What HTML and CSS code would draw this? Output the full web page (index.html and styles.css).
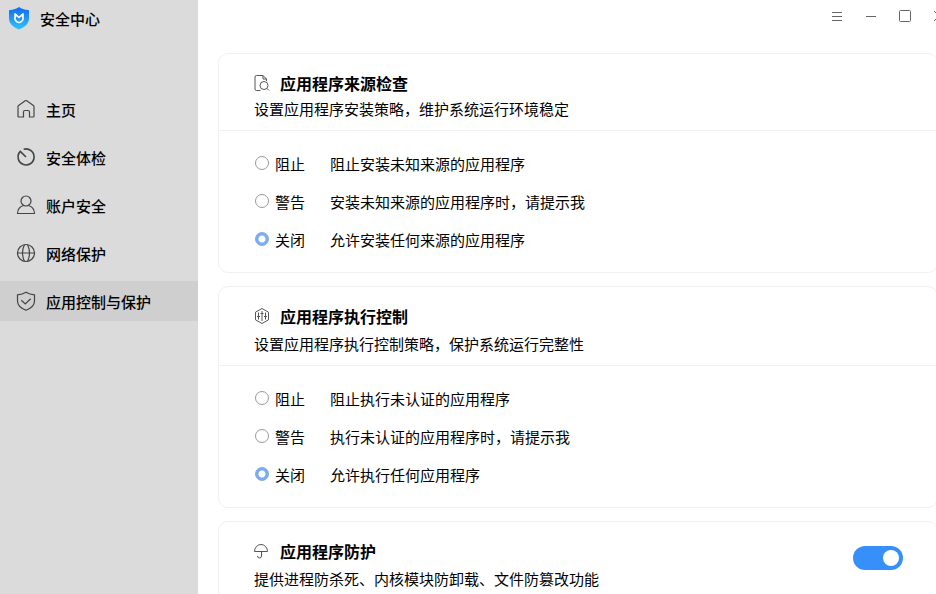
FILE: index.html
```
<!DOCTYPE html>
<html lang="zh-CN">
<head>
    <meta charset="UTF-8">
    <meta name="viewport" content="width=device-width, initial-scale=1.0">
    <title>安全中心</title>
    <link rel="stylesheet" href="styles.css">
</head>
<body>
    <div class="window">
        <aside class="sidebar">
            <div class="brand">
                <svg class="logo" viewBox="0 0 22 24">
                    <defs>
                        <linearGradient id="shield" x1="0" y1="0" x2="0" y2="1">
                            <stop offset="0" stop-color="#1268f5"/>
                            <stop offset="1" stop-color="#2ec4fb"/>
                        </linearGradient>
                    </defs>
                    <path fill="url(#shield)" d="M11 1c2.500 1.800 5.500 2.800 9.200 2.900.6 0 .8.400.8 1V12c0 5.500-4 9.300-10 11.400C5 21.300 1 17.500 1 12V4.900c0-.6.200-1 .8-1C5.500 3.800 8.500 2.800 11 1z"/>
                    <path fill="none" stroke="#fff" stroke-width="1.600" stroke-linejoin="round" stroke-linecap="round" d="M7.600 10.200a4 4 0 1 0 6.800 0M7 10.500V7.800l4 3.700 4-3.700v2.700"/>
                </svg>
                <span>安全中心</span>
            </div>
            <nav class="menu">
                <a href="#">
                    <svg class="icon" viewBox="0 0 20 20"><path d="M2 7.500q0-.7.600-1.100L9.200 1.800q.8-.5 1.600 0l6.600 4.600q.6.400.6 1.100V17q0 1-1 1h-3.500V13q0-1.500-1.500-1.500H9Q7.500 11.500 7.500 13v5H3q-1 0-1-1z"/></svg>
                    <span>主页</span>
                </a>
                <a href="#">
                    <svg class="icon bold" viewBox="0 0 20 20"><path d="M7.700 2.300A8 8 0 1 1 4.300 4.400L10 10"/></svg>
                    <span>安全体检</span>
                </a>
                <a href="#">
                    <svg class="icon" viewBox="0 0 20 20"><circle cx="10" cy="6" r="5"/><path d="M7.500 10.500C4 11.500 1.600 14.500 1.500 18.500h17c-.1-4-2.500-7-6-8"/></svg>
                    <span>账户安全</span>
                </a>
                <a href="#">
                    <svg class="icon" viewBox="0 0 20 20"><circle cx="10" cy="10" r="8.500"/><path d="M1.500 10h17M8.500 1.500q-4 8.500 0 17M11.500 1.500q4 8.500 0 17"/></svg>
                    <span>网络保护</span>
                </a>
                <a href="#" class="active">
                    <svg class="icon" viewBox="0 0 20 20"><path d="M10 1.200c2.500 1.600 5.300 2.400 8.500 2.700V10c0 4.300-3.500 7.300-8.500 9.200C5 17.300 1.500 14.300 1.500 10V3.900C4.700 3.600 7.500 2.800 10 1.200zM5.300 9.300l4 3.700 5.400-5.200"/></svg>
                    <span>应用控制与保护</span>
                </a>
            </nav>
        </aside>

        <main class="main">
            <div class="titlebar">
                <button type="button" aria-label="菜单"><svg viewBox="0 0 14 14"><path d="M2 3.500h10M2 7.500h10M2 11.500h10"/></svg></button>
                <button type="button" aria-label="最小化"><svg viewBox="0 0 14 14"><path d="M2 7.500h10"/></svg></button>
                <button type="button" aria-label="最大化"><svg viewBox="0 0 14 14"><rect x="1.500" y="1.500" width="11" height="11" rx="1"/></svg></button>
                <button type="button" aria-label="关闭"><svg viewBox="0 0 14 14"><path d="M2 2l10 10M12 2L2 12"/></svg></button>
            </div>

            <section class="card compact">
                <header class="card-head">
                    <div>
                        <h2>
                            <svg viewBox="0 0 16 16"><path d="M6.500 15.500h-4q-1.500 0-1.500-1.500V2Q1 .5 2.500 .5h6.500L12.500 4v2M9 .5V4h3.500"/><circle cx="10" cy="10.500" r="4"/><path d="M13 13.500l2 2"/></svg>
                            应用程序来源检查
                        </h2>
                        <p>设置应用程序安装策略，维护系统运行环境稳定</p>
                    </div>
                </header>
                <div class="options">
                    <label><input type="radio" name="source"><span class="level">阻止</span><span>阻止安装未知来源的应用程序</span></label>
                    <label><input type="radio" name="source"><span class="level">警告</span><span>安装未知来源的应用程序时，请提示我</span></label>
                    <label><input type="radio" name="source" checked><span class="level">关闭</span><span>允许安装任何来源的应用程序</span></label>
                </div>
            </section>

            <section class="card">
                <header class="card-head">
                    <div>
                        <h2>
                            <svg viewBox="0 0 16 16"><path d="M8 .5l6.500 3.700v7.600L8 15.500l-6.500-3.700V4.200z"/><path d="M4.500 4.500v7M8 3v10M11.500 4.500v7M3 8.500h3M6.500 5.500h3M10 8.500h3"/></svg>
                            应用程序执行控制
                        </h2>
                        <p>设置应用程序执行控制策略，保护系统运行完整性</p>
                    </div>
                </header>
                <div class="options">
                    <label><input type="radio" name="exec"><span class="level">阻止</span><span>阻止执行未认证的应用程序</span></label>
                    <label><input type="radio" name="exec"><span class="level">警告</span><span>执行未认证的应用程序时，请提示我</span></label>
                    <label><input type="radio" name="exec" checked><span class="level">关闭</span><span>允许执行任何应用程序</span></label>
                </div>
            </section>

            <section class="card">
                <header class="card-head">
                    <div>
                        <h2>
                            <svg viewBox="0 0 16 16"><path d="M.5 8.500a6.500 7 0 0 1 13 0zM7.500 8.500v4.500a2 2 0 0 1-4 0"/></svg>
                            应用程序防护
                        </h2>
                        <p>提供进程防杀死、内核模块防卸载、文件防篡改功能</p>
                    </div>
                    <input type="checkbox" class="switch" role="switch" aria-label="应用程序防护" checked>
                </header>
            </section>
        </main>
    </div>
</body>
</html>
```
FILE: styles.css
```
* {
    box-sizing: border-box;
}

body {
    margin: 0;
    overflow: hidden;
    background-color: #fff;
    color: #000;
    font-family: "Noto Sans CJK SC", sans-serif;
    font-size: 15px;
    line-height: 22px;
}

.window {
    display: flex;
    height: 100vh;
}

.sidebar {
    width: 198px;
    flex-shrink: 0;
    background-color: #dbdbdb;
    font-weight: 500;
}

.brand {
    display: flex;
    align-items: center;
    gap: 10px;
    height: 37px;
    padding-left: 8px;
}

.logo {
    width: 22px;
    height: 24px;
    margin-bottom: 2px;
}

.menu {
    display: flex;
    flex-direction: column;
    gap: 8px;
    margin-top: 52px;
}

.menu a {
    display: flex;
    align-items: center;
    gap: 10px;
    height: 40px;
    padding-left: 16px;
    color: #000;
    text-decoration: none;
}

.menu a.active {
    background-color: #cfcfcf;
}

.menu span {
    padding-top: 2px;
}

.icon {
    width: 20px;
    height: 20px;
    fill: none;
    stroke: #444;
    stroke-width: 1.2;
}

.icon.bold {
    stroke-width: 1.6;
}

/* the page runs a little past the right edge of the window */
.main {
    flex: 1;
    margin-right: -20px;
    padding: 0 18px 0 20px;
}

.titlebar {
    display: flex;
    justify-content: flex-end;
    height: 53px;
    margin-right: -18px;
}

.titlebar button {
    width: 34px;
    height: 32px;
    padding: 0;
    border: none;
    background: none;
}

.titlebar svg {
    display: block;
    width: 14px;
    height: 14px;
    margin: auto;
    fill: none;
    stroke: #666;
}

.card {
    margin-bottom: 13px;
    border: 1px solid #f0f0f0;
    border-radius: 10px;
}

.card-head {
    display: flex;
    align-items: flex-start;
    justify-content: space-between;
    padding: 18px 34px 10px 35px;
    border-bottom: 1px solid #f0f0f0;
}

.card h2 {
    display: flex;
    align-items: center;
    gap: 10px;
    margin: 0 0 6px;
    font-size: 16px;
    font-weight: 700;
}

.compact h2 {
    margin-bottom: 4px;
}

.card h2 svg {
    width: 16px;
    height: 16px;
    fill: none;
    stroke: #555;
}

.card p {
    margin: 0;
}

.options {
    display: flex;
    flex-direction: column;
    gap: 16px;
    padding: 22px 36px 21px;
}

.options label {
    display: flex;
    align-items: center;
}

.options input {
    appearance: none;
    width: 14px;
    height: 14px;
    margin: 0 6px 2px 0;
    border: 1px solid #999;
    border-radius: 50%;
}

.options input:checked {
    border-color: #8aa8d4;
    background: radial-gradient(circle, #fff 3px, #73aefb 4px);
}

.level {
    width: 55px;
}

.switch {
    appearance: none;
    display: flex;
    align-items: center;
    width: 50px;
    height: 24px;
    margin: 6px 0 0;
    padding: 0 4px;
    border-radius: 12px;
    background-color: #3790fa;
}

.switch::before {
    content: "";
    width: 16px;
    height: 16px;
    border-radius: 50%;
    background-color: #fff;
}

.switch:checked {
    justify-content: flex-end;
}
```
